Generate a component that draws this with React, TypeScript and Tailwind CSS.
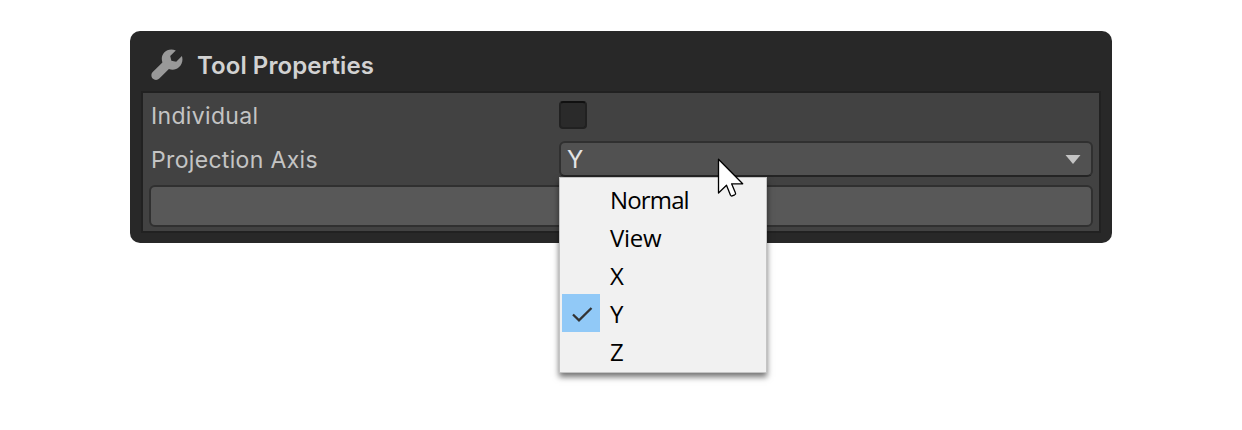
const options = ["Normal", "View", "X", "Y", "Z"];

function WrenchIcon() {
  return (
    <svg className="h-8 w-8 shrink-0" viewBox="0 0 32 32" aria-hidden="true">
      <path
        d="M24.800 1.400C20.500-.4 16 .4 13.200 3.500C10.700 6.200 10.200 10 11.400 13.400L1.700 22.900C-.1 24.700 0 27.900 1.700 29.600C3.500 31.400 6.500 31.400 8.300 29.600L17.900 20C21.300 21.400 25.300 20.800 28.100 18.100C31.200 15.300 32.200 11.200 30.900 7L25.200 12.700L20.400 11.800L19.200 7Z"
        fill="#999999"
      />
    </svg>
  );
}

function Cursor() {
  return (
    <svg className="absolute left-[156px] top-[14px] z-20 h-[42px] w-[30px]" viewBox="0 0 30 42" aria-hidden="true">
      <path
        d="M1.500 2.300V36L9.500 28.300L13.500 38.200Q14.100 39.300 15.200 38.900L17.700 37.800Q19 37.100 18.500 36L14.600 26.800H25.700Z"
        fill="white"
        stroke="black"
        strokeWidth="1.3"
        strokeLinejoin="round"
      />
    </svg>
  );
}

function AxisMenu() {
  return (
    <div className="absolute -left-0.5 top-[34px] z-10 h-[196px] w-[208px] border border-[#c4c4c4] bg-[#f1f1f1] pt-0.5 shadow-[0_4px_6px_rgba(0,0,0,0.55)]">
      {options.map((option) => (
        <div key={option} className="flex h-[38px] items-center pl-0.5">
          <div className={option === "Y" ? "flex size-[38px] items-center justify-center bg-[#91c9f7]" : "size-[38px]"}>
            {option === "Y" && (
              <svg className="size-[38px]" viewBox="0 0 38 38" aria-hidden="true">
                <path d="M11 20.500L17 26.300L29.500 14" fill="none" stroke="#333" strokeWidth="2.300" />
              </svg>
            )}
          </div>
          <span className={option === "Normal" ? "pl-2.5 pt-0.5 font-['Open_Sans',sans-serif] text-2xl leading-9 tracking-[-0.85px] text-black" : "pl-2.5 pt-0.5 font-['Open_Sans',sans-serif] text-2xl leading-9 tracking-[-0.3px] text-black"}>{option}</span>
        </div>
      ))}
    </div>
  );
}

export default function App() {
  return (
    <main className="h-[430px] w-[1242px] bg-white px-[130px] pt-[31px] font-['Inter',sans-serif] [font-optical-sizing:none]">
      <section className="h-[212px] rounded-[10px] bg-[#282828] px-[11px]">
        <header className="flex h-[60px] items-center gap-3.5 pl-2.5 pt-2">
          <WrenchIcon />
          <h1 className="pt-0.5 text-2xl font-semibold tracking-[0.07px] text-[#d2d2d2]">Tool Properties</h1>
        </header>
        <div className="flex h-[142px] flex-col border-2 border-[#212121] bg-[#424242] px-1.5 pt-2">
          <div className="flex h-7 items-center">
            <span className="w-[410px] pl-0.5 pt-0.5 text-[23px] tracking-[0.33px] text-[#c4c4c4]">Individual</span>
            <div className="size-7 rounded border-2 border-[#212121] border-t-[#101010] bg-[#2a2a2a]" />
          </div>
          <div className="mt-3 flex h-9 items-center">
            <span className="w-[410px] pl-0.5 pt-0.5 text-[23px] tracking-[0.33px] text-[#c4c4c4]">Projection Axis</span>
            <div className="relative flex h-9 w-[534px] items-center justify-between rounded-md border-2 border-[#303030] border-b-[#242424] bg-[#515151] pl-1.5 pr-2.5">
              <span className="pt-px text-2xl text-[#e4e4e4]">Y</span>
              <svg className="h-[9px] w-4" viewBox="0 0 16 9" aria-hidden="true">
                <path d="M.5 0H15.500L8 9Z" fill="#c4c4c4" />
              </svg>
              <AxisMenu />
              <Cursor />
            </div>
          </div>
          <div className="mt-2 h-[42px] rounded-md border-2 border-[#303030] bg-[#585858]" />
        </div>
      </section>
    </main>
  );
}
